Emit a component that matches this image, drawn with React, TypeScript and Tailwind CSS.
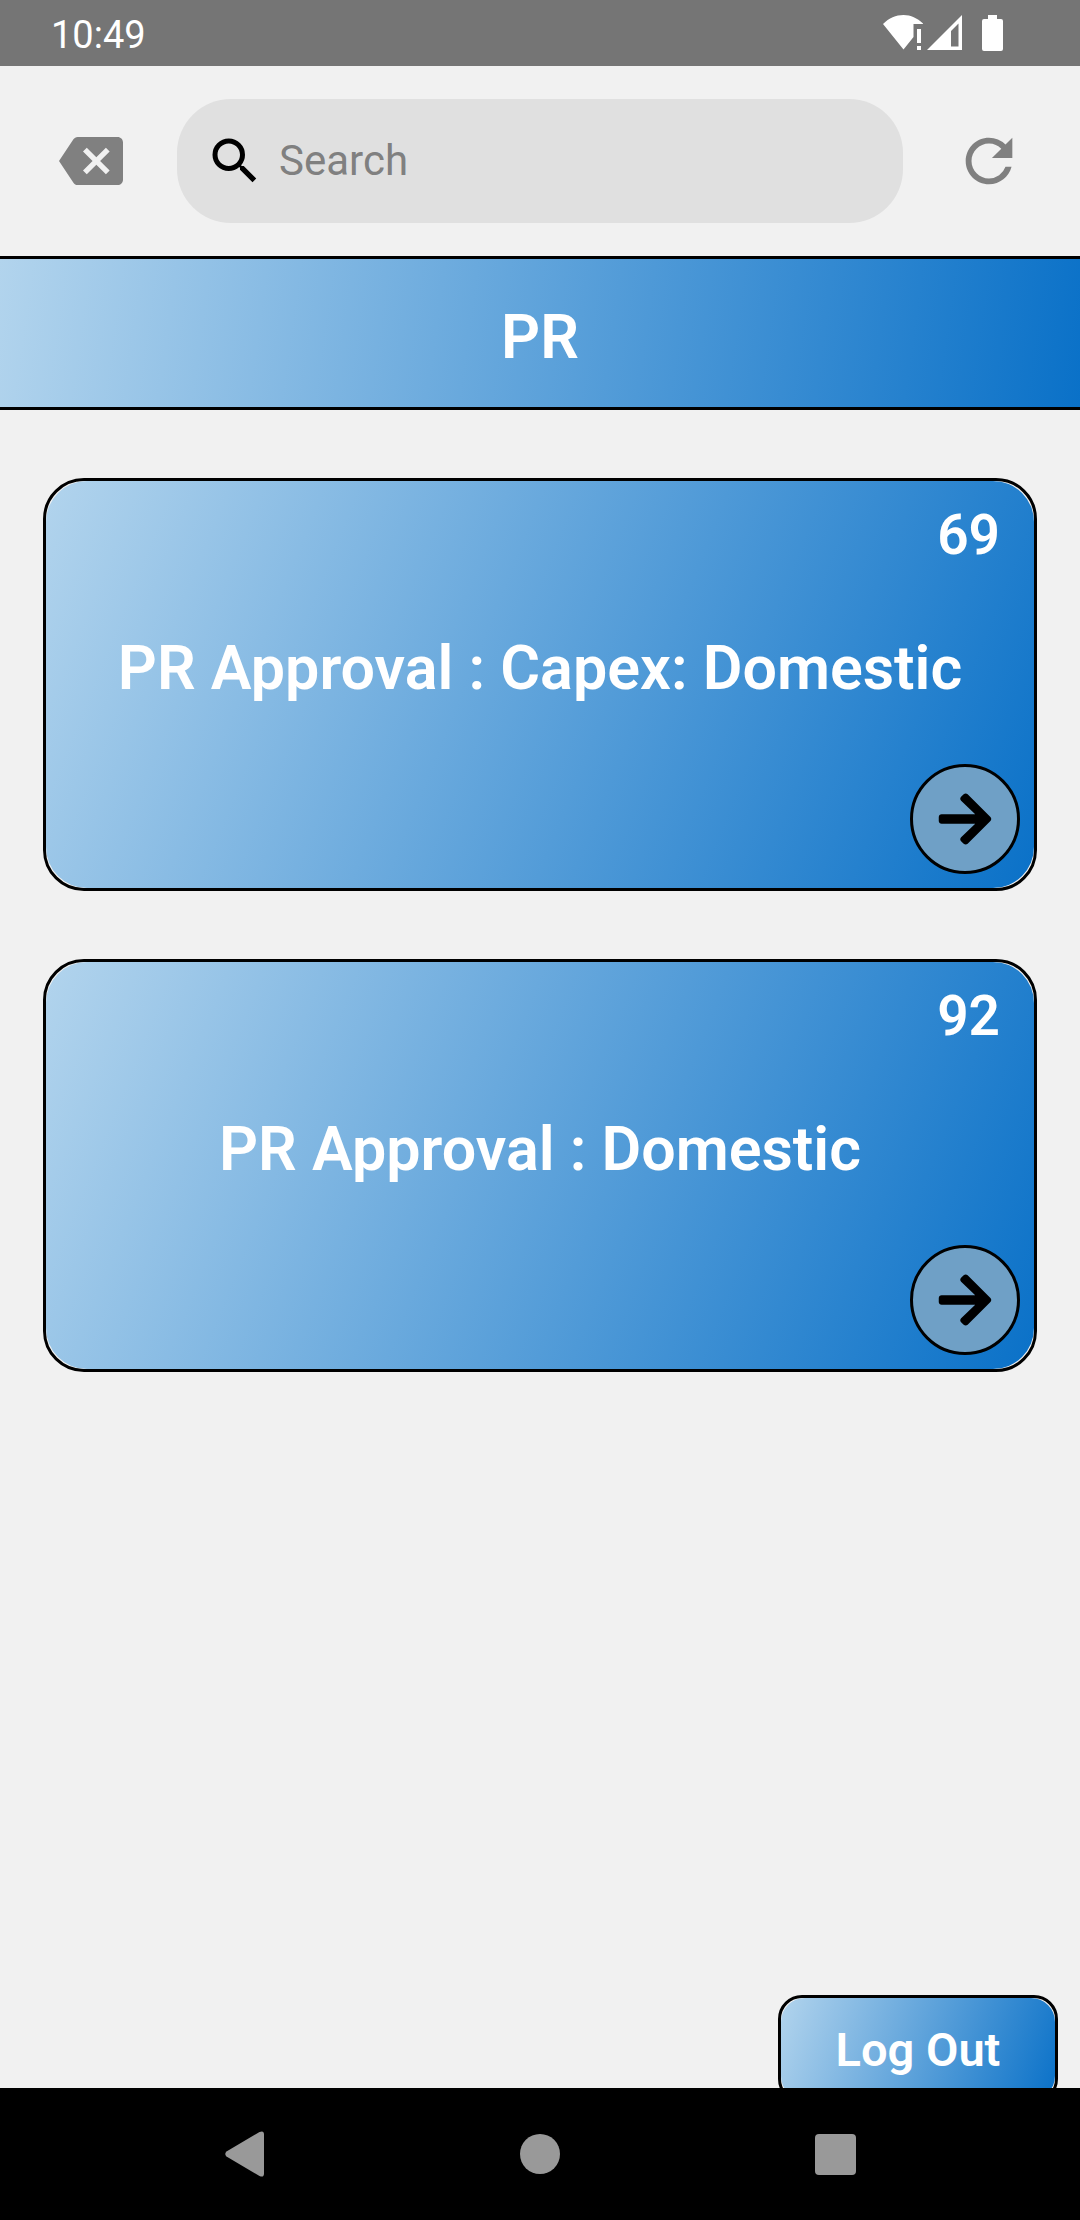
import { FaArrowRight } from 'react-icons/fa';
import { MdBackspace, MdRefresh, MdSearch } from 'react-icons/md';

const approvals = [
  { title: 'PR Approval : Capex: Domestic', count: 69 },
  { title: 'PR Approval : Domestic', count: 92 },
];

function StatusBar() {
  return (
    <div className="flex h-[66px] items-center justify-between bg-[#757575] pr-[77px] pl-[51px] text-white">
      <span className="pt-1 text-[38px] leading-[62px]">10:49</span>
      <div className="flex items-center">
        <svg width="40" height="36" viewBox="0 0 40 36" fill="currentColor" aria-hidden="true">
          <path d="M0 9C6 3 13 0 20.500 0S34 3 40 8.500V9H30.500V22L20.500 34.500Z" />
          <path d="M34 14h4v14h-4zM34 31h4v4h-4z" />
        </svg>
        <svg className="ml-1" width="35" height="36" viewBox="0 0 35 36" fill="currentColor" fillRule="evenodd" aria-hidden="true">
          <path d="M35 0V35H0ZM31.500 8.500L24 16V31.500H31.500Z" />
        </svg>
        <svg className="ml-5" width="21" height="36" viewBox="0 0 21 36" fill="currentColor" aria-hidden="true">
          <path d="M6 0H15V4H19Q21 4 21 6V34Q21 36 19 36H2Q0 36 0 34V6Q0 4 2 4H6Z" />
        </svg>
      </div>
    </div>
  );
}

function Header() {
  return (
    <header className="flex h-[190px] items-center pr-14 pl-[59px] text-[#808080]">
      <button type="button" aria-label="Back">
        <MdBackspace size={64} />
      </button>
      <label className="mr-[51px] ml-[54px] flex h-[124px] min-w-0 flex-1 items-center rounded-[54px] bg-[#e0e0e0] pl-7">
        <MdSearch size={60} className="shrink-0 text-black" />
        <input
          type="text"
          aria-label="Search"
          placeholder="Search"
          className="ml-[14px] min-w-0 flex-1 bg-transparent pb-[2px] text-[42px] text-black outline-none placeholder:text-[#808080]"
        />
      </label>
      <button type="button" aria-label="Refresh">
        <MdRefresh size={70} />
      </button>
    </header>
  );
}

function ApprovalCard({ title, count }: { title: string; count: number }) {
  return (
    <article className="rounded-[41px] border-3 border-black">
      <div className="flex h-[407px] flex-col justify-between rounded-[41px] bg-[linear-gradient(112deg,#b2d4ed,#0a71c8)] pt-[21px] pb-[14px] text-white">
        <span className="self-end pr-[34px] text-[55px] leading-[66px] font-semibold">{count}</span>
        <h2 className="pt-1 text-center text-[61px] leading-[76px] font-semibold">{title}</h2>
        <button
          type="button"
          aria-label={`Open ${title}`}
          className="mr-[14px] flex size-[110px] items-center justify-center self-end rounded-full border-3 border-black bg-[#6fa0c6] text-black"
        >
          <FaArrowRight size={60} />
        </button>
      </div>
    </article>
  );
}

function NavigationBar() {
  return (
    <nav className="relative flex h-[132px] items-center justify-center gap-[215px] bg-black text-[#999999]">
      <button type="button" aria-label="Back" className="flex size-20 items-center justify-center">
        <svg width="40" height="46" viewBox="0 0 40 46" fill="currentColor" aria-hidden="true">
          <path d="M1.500 20.500L34.500 1Q39 -1 39 3.500V42.500Q39 47 34.500 45L1.500 25.500Q-1 23 1.500 20.500Z" />
        </svg>
      </button>
      <button type="button" aria-label="Home" className="flex size-20 items-center justify-center">
        <span className="size-10 rounded-full bg-current" />
      </button>
      <button type="button" aria-label="Recent apps" className="flex size-20 items-center justify-center">
        <span className="size-[41px] rounded-[4px] bg-current" />
      </button>
    </nav>
  );
}

export default function App() {
  return (
    <div className="flex min-h-screen flex-col bg-[#f1f1f1] font-[Roboto,sans-serif]">
      <StatusBar />
      <Header />
      <h1 className="border-y-3 border-black bg-[linear-gradient(98deg,#b2d4ed,#0a71c8)] pt-10 pb-8 text-center text-[61px] leading-[76px] font-semibold text-white">
        PR
      </h1>
      <main className="flex flex-1 flex-col gap-[68px] px-[43px] pt-[68px]">
        {approvals.map((item) => (
          <ApprovalCard key={item.title} {...item} />
        ))}
      </main>
      <button type="button" className="mr-[22px] mb-[-15px] self-end rounded-[24px] border-3 border-black text-white">
        <span className="flex h-[102px] w-[274px] items-center justify-center rounded-[24px] bg-[linear-gradient(110deg,#b2d4ed,#0a71c8)] pt-[2px] text-[47px] font-semibold">
          Log Out
        </span>
      </button>
      <NavigationBar />
    </div>
  );
}
